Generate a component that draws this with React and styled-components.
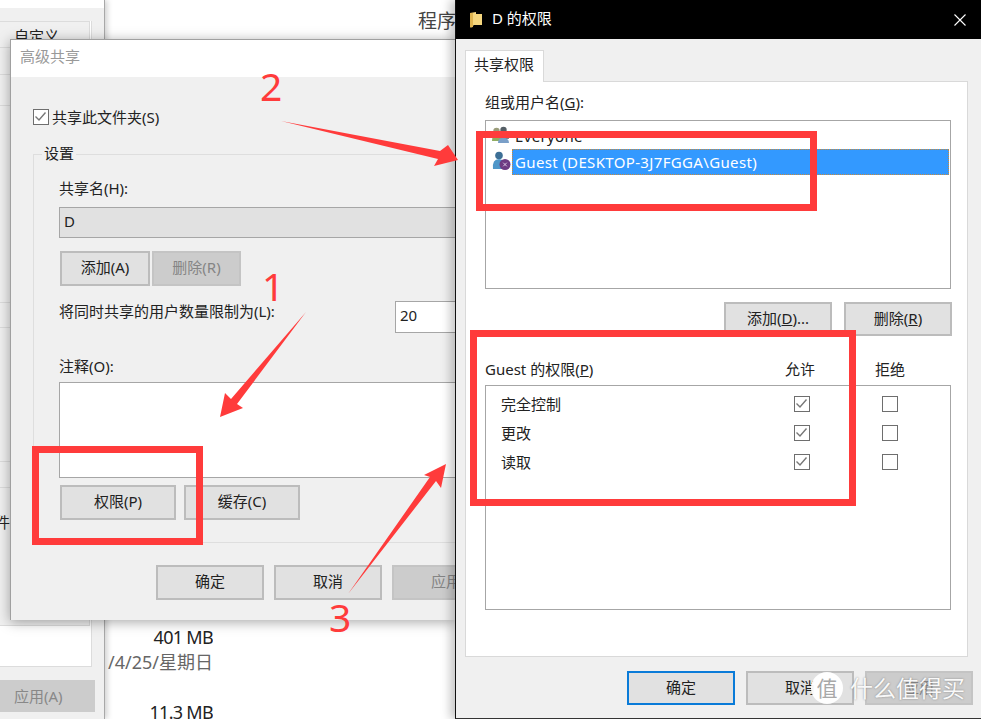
import React from "react";
import styled, { createGlobalStyle } from "styled-components";

const GlobalStyle = createGlobalStyle`
    html, body {
        margin: 0;
        padding: 0;
        background: #fff;
        overflow: hidden;
    }
    * {
        box-sizing: border-box;
    }
`;

const Desktop = styled.div`
    position: relative;
    width: 981px;
    height: 719px;
    overflow: hidden;
    background: #fff;
    color: #222;
    font-family: "Noto Sans", "Noto Sans CJK SC", sans-serif;
    font-size: 15px;
    line-height: 20px;
`;

/* window behind everything, only its edges show */
const BackWindow = styled.div`
    position: absolute;
    left: 0;
    top: 0;
    width: 105px;
    height: 719px;
    background: #f0f0f0;
    border-right: 1px solid #a8a8a8;
    box-shadow: 2px 0 6px rgba(0, 0, 0, 0.2);
    display: flex;
    flex-direction: column;
`;

const BackTop = styled.div`
    height: 8px;
    background: #fff;
`;

const BackHead = styled.div`
    height: 13px;
`;

const BackRow = styled.div`
    height: ${(p) => p.$h}px;
    width: 90px;
    padding-left: 14px;
    padding-top: ${(p) => p.$pad || 0}px;
    background: #f0f0f0;
    border-bottom: 1px solid #dcdcdc;
    border-right: 1px solid #dcdcdc;
    border-top: ${(p) => (p.$first ? "1px solid #dcdcdc" : "0")};
    white-space: nowrap;
`;

const BackTail = styled.div`
    width: 92px;
    height: 41px;
    background: #fff;
    border-right: 1px solid #dcdcdc;
    border-bottom: 1px solid #dcdcdc;
`;

const CutWord = styled.span`
    display: block;
    margin-left: -34px;
`;

const BackBody = styled.div`
    width: 92px;
    background: #fff;
    border-right: 1px solid #dcdcdc;
`;

const BackApply = styled.div`
    width: 95px;
    height: 32px;
    margin-top: 13px;
    background: #ccc;
    color: #888;
    padding-left: 14px;
    line-height: 32px;
`;

const ProgramLabel = styled.div`
    position: absolute;
    left: 418px;
    top: 8px;
    font-size: 19px;
    line-height: 26px;
    color: #444;
    white-space: nowrap;
`;

const SizeColumn = styled.div`
    position: absolute;
    left: 105px;
    top: 626px;
    width: 108px;
    overflow: hidden;
    font-size: 18px;
    line-height: 22px;
    white-space: nowrap;
`;

const SizeText = styled.div`
    display: flex;
    justify-content: flex-end;
    color: ${(p) => (p.$muted ? "#666" : "#222")};
    letter-spacing: ${(p) => (p.$muted ? "0" : "-0.7px")};
    margin-top: ${(p) => p.$top || 0}px;
`;

/* advanced sharing dialog */
const AdvancedDialog = styled.div`
    position: absolute;
    left: 10px;
    top: 39px;
    width: 445px;
    height: 581px;
    overflow: hidden;
    background: #f0f0f0;
    border-top: 1px solid #a0a0a0;
    border-left: 1px solid #a0a0a0;
`;

const DialogShadow = styled.div`
    position: absolute;
    left: 10px;
    top: 39px;
    width: 445px;
    height: 581px;
    box-shadow: 0 2px 12px rgba(0, 0, 0, 0.35);
`;

const AdvancedTitle = styled.div`
    height: 37px;
    background: #fff;
    color: #999;
    padding: 6px 0 0 9px;
`;

const CheckRow = styled.div`
    display: flex;
    align-items: center;
    gap: 3px;
    margin: 31px 0 0 22px;
    height: 18px;
`;

const Box = styled.span`
    display: block;
    width: 16px;
    height: 16px;
    background: #fff;
    border: 1.5px solid #6e6e6e;
    flex: none;
`;

const Group = styled.div`
    position: relative;
    width: 500px;
    margin: 28px 0 0 22px;
    padding: 0 0 22px 25px;
    border: 1px solid #dedede;
`;

const GroupLegend = styled.div`
    position: absolute;
    left: 8px;
    top: -12px;
    padding: 0 2px;
    background: #f0f0f0;
`;

const FieldLabel = styled.div`
    margin-top: ${(p) => p.$top}px;
    white-space: nowrap;
`;

const Input = styled.div`
    height: ${(p) => p.$h}px;
    margin-top: ${(p) => p.$top || 0}px;
    padding: ${(p) => p.$pad || 0}px 0 0 4px;
    background: ${(p) => p.$bg || "#fff"};
    border: 1.5px solid #a6a6a6;
`;

const ButtonRow = styled.div`
    display: flex;
    gap: ${(p) => p.$gap}px;
    margin: ${(p) => p.$top}px 0 0 1px;
`;

const Button = styled.div`
    flex: none;
    width: ${(p) => p.$w}px;
    height: ${(p) => p.$h || 35}px;
    padding-bottom: 3px;
    display: flex;
    align-items: center;
    justify-content: center;
    background: ${(p) => (p.$off ? "#ccc" : "#e1e1e1")};
    color: ${(p) => (p.$off ? "#858585" : "#222")};
    border: 2px solid ${(p) => (p.$focus ? "#0a7bd8" : p.$off ? "#c4c4c4" : "#bcbcbc")};
    white-space: nowrap;
`;

const LimitRow = styled.div`
    display: grid;
    grid-template-columns: 336px 1fr;
    margin-top: 15px;
    line-height: 20px;
`;

const DialogFooter = styled.div`
    display: flex;
    gap: ${(p) => p.$gap || 10}px;
    margin: ${(p) => p.$top}px 0 0 ${(p) => p.$left}px;
`;

/* permissions dialog */
const PermDialog = styled.div`
    position: absolute;
    left: 455px;
    top: 0;
    width: 526px;
    height: 719px;
    background: #f0f0f0;
    border-left: 1px solid #111;
    border-bottom: 1px solid #333;
    box-shadow: -5px 0 9px rgba(0, 0, 0, 0.22);
`;

const TitleBar = styled.div`
    height: 39px;
    background: #000;
    color: #fff;
    display: flex;
    align-items: center;
    padding: 0 15px 0 14px;
`;

const TitleText = styled.span`
    margin: 0 0 3px 10px;
    flex: 1;
`;

const Tab = styled.div`
    position: relative;
    z-index: 1;
    width: 79px;
    height: 32px;
    margin: 11px 0 0 9px;
    padding: 3px 0 0 8px;
    background: #fff;
    border: 1px solid #d9d9d9;
    border-bottom: 0;
`;

const TabPanel = styled.div`
    width: 503px;
    height: 576px;
    margin: -1px 0 0 9px;
    padding: 10px 0 0 19px;
    background: #fff;
    border: 1px solid #d9d9d9;
`;

const UserList = styled.div`
    width: 466px;
    height: 169px;
    margin-top: 8px;
    padding-top: 4px;
    border: 1.5px solid #a6a6a6;
`;

const UserRow = styled.div`
    display: flex;
    align-items: flex-start;
    height: ${(p) => p.$h}px;
    padding: 0 1px 0 6px;
`;

const UserName = styled.span`
    flex: 1;
    height: 100%;
    padding-left: 3px;
    line-height: ${(p) => p.$line}px;
    letter-spacing: 0.35px;
    white-space: nowrap;
    ${(p) =>
        p.$selected &&
        `
        background: #3399ff;
        color: #fff;
        outline: 1px dotted #c98a3a;
        outline-offset: -1px;
    `}
`;

const UserActions = styled.div`
    display: flex;
    justify-content: flex-end;
    gap: 12px;
    width: 467px;
    margin-top: 13px;
`;

const PermHeader = styled.div`
    display: grid;
    grid-template-columns: 270px 90px 90px;
    margin-top: 23px;
    height: 20px;
`;

const HeaderCell = styled.div`
    text-align: center;
`;

const PermList = styled.div`
    width: 466px;
    height: 225px;
    margin-top: 6px;
    padding: 3px 16px 0 15px;
    border: 1.5px solid #a6a6a6;
`;

const PermRow = styled.div`
    display: grid;
    grid-template-columns: 1fr 88px 88px;
    align-items: center;
    justify-items: center;
    height: 29px;
`;

const PermName = styled.span`
    justify-self: start;
`;

/* red annotations painted on top of the screenshot */
const RedBox = styled.div`
    position: absolute;
    left: ${(p) => p.$x}px;
    top: ${(p) => p.$y}px;
    width: ${(p) => p.$w}px;
    height: ${(p) => p.$h}px;
    border: 7px solid #ff3b3b;
`;

const RedNumber = styled.div`
    position: absolute;
    left: ${(p) => p.$x}px;
    top: ${(p) => p.$y}px;
    color: #ff3b3b;
    font-size: 39px;
    font-weight: 400;
    line-height: 40px;
`;

const ArrowLayer = styled.svg`
    position: absolute;
    left: 0;
    top: 0;
`;

const Watermark = styled.div`
    position: absolute;
    left: 811px;
    top: 672px;
    display: flex;
    align-items: center;
    gap: 7px;
    color: rgba(255, 255, 255, 0.95);
    font-size: 23px;
    line-height: 32px;
    white-space: nowrap;
    text-shadow: 0 0 2px rgba(110, 110, 110, 0.8);
`;

const WatermarkBadge = styled.span`
    width: 32px;
    height: 32px;
    border-radius: 50%;
    background: rgba(255, 255, 255, 0.95);
    color: #a8a8a8;
    font-size: 21px;
    text-align: center;
    text-shadow: none;
`;

const Check = () => (
    <svg width="13" height="13" viewBox="0 0 13 13" style={{ display: "block" }}>
        <path d="M1.5 6.5 L5 10 L11.5 2.5" fill="none" stroke="#777" strokeWidth="1.4" />
    </svg>
);

const FolderIcon = () => (
    <svg width="12" height="16" viewBox="0 0 12 16">
        <path d="M0 1 L6 0 L6 2 L12 2 L12 13 L4 13 L1 15.5 L0 15 Z" fill="#f5d67e" />
        <path d="M0 1 L3 1 L3 15 L1 15.5 L0 15 Z" fill="#e0b44e" />
    </svg>
);

const CloseIcon = () => (
    <svg width="12" height="12" viewBox="0 0 12 12">
        <path d="M0.5 0.5 L11.5 11.5 M11.5 0.5 L0.5 11.5" stroke="#fff" strokeWidth="1.1" />
    </svg>
);

const EveryoneIcon = () => (
    <svg width="20" height="20" viewBox="0 0 20 20" style={{ flex: "none" }}>
        <circle cx="11.5" cy="5" r="3.2" fill="#555f66" />
        <path d="M7 14 Q7 8 12 8 Q17 8 17 14 Z" fill="#7a8288" />
        <circle cx="4.5" cy="6" r="3.2" fill="#9a9c7a" />
        <path d="M0 16 Q0 9 5 9 Q9 9 9 16 Z" fill="#90ad62" />
        <circle cx="11" cy="10.5" r="2.6" fill="#8fb0d0" />
        <path d="M6 18 Q6 13 11 13 Q17 13 17 18 Z" fill="#7a9fc8" />
    </svg>
);

const GuestIcon = () => (
    <svg width="20" height="20" viewBox="0 0 20 20" style={{ flex: "none", marginTop: 2 }}>
        <circle cx="7" cy="4.5" r="3.8" fill="#3d6f96" />
        <path d="M1 18 Q0 8 7 8 Q13 8 13 18 Z" fill="#4f97c9" />
        <circle cx="13" cy="13.5" r="5.5" fill="#6d3b82" />
        <path d="M11.2 11.7 L14.8 15.3 M14.8 11.7 L11.2 15.3" stroke="#d8c6e2" strokeWidth="1" />
    </svg>
);

const backRows = [
    { h: 27, first: true, pad: 4, text: "自定义" },
    { h: 27 },
    { h: 31 },
    { h: 197 },
    { h: 25 },
    { h: 134 },
    { h: 26 },
    { h: 138, pad: 24, cut: "文件" },
];

const permissions = ["完全控制", "更改", "读取"];

export default function App() {
    return (
        <Desktop>
            <GlobalStyle />

            <BackWindow>
                <BackTop />
                <BackHead />
                <BackBody>
                    {backRows.map((r, i) => (
                        <BackRow key={i} $h={r.h} $first={r.first} $pad={r.pad}>
                            {r.text}
                            {r.cut && <CutWord>{r.cut}</CutWord>}
                        </BackRow>
                    ))}
                    <BackTail />
                </BackBody>
                <BackApply>应用(A)</BackApply>
            </BackWindow>

            <ProgramLabel>程序</ProgramLabel>
            <SizeColumn>
                <SizeText>401 MB</SizeText>
                <SizeText $muted $top={3}>2021/4/25/星期日</SizeText>
                <SizeText $top={28}>11.3 MB</SizeText>
            </SizeColumn>

            <DialogShadow />
            <AdvancedDialog>
                <AdvancedTitle>高级共享</AdvancedTitle>
                <CheckRow>
                    <Box>
                        <Check />
                    </Box>
                    共享此文件夹(S)
                </CheckRow>
                <Group>
                    <GroupLegend>设置</GroupLegend>
                    <FieldLabel $top={23}>共享名(H):</FieldLabel>
                    <Input $h={31} $top={9} $pad={3} $bg="#e1e1e1">D</Input>
                    <ButtonRow $gap={2} $top={13}>
                        <Button $w={90}>添加(A)</Button>
                        <Button $w={89} $off>删除(R)</Button>
                    </ButtonRow>
                    <LimitRow>
                        将同时共享的用户数量限制为(L):
                        <Input $h={32} $pad={3}>20</Input>
                    </LimitRow>
                    <FieldLabel $top={23}>注释(O):</FieldLabel>
                    <Input $h={96} $top={6} />
                    <ButtonRow $gap={8} $top={7}>
                        <Button $w={116}>权限(P)</Button>
                        <Button $w={116}>缓存(C)</Button>
                    </ButtonRow>
                </Group>
                <DialogFooter $top={22} $left={145}>
                    <Button $w={108}>确定</Button>
                    <Button $w={108}>取消</Button>
                    <Button $w={108} $off>应用</Button>
                </DialogFooter>
            </AdvancedDialog>

            <PermDialog>
                <TitleBar>
                    <FolderIcon />
                    <TitleText>D 的权限</TitleText>
                    <CloseIcon />
                </TitleBar>
                <Tab>共享权限</Tab>
                <TabPanel>
                    <div>
                        组或用户名(<u>G</u>):
                    </div>
                    <UserList>
                        <UserRow $h={24}>
                            <EveryoneIcon />
                            <UserName $line={22}>Everyone</UserName>
                        </UserRow>
                        <UserRow $h={26}>
                            <GuestIcon />
                            <UserName $line={26} $selected>
                                Guest (DESKTOP-3J7FGGA\Guest)
                            </UserName>
                        </UserRow>
                    </UserList>
                    <UserActions>
                        <Button $w={108} $h={34}>
                            添加(<u>D</u>)...
                        </Button>
                        <Button $w={108} $h={34}>
                            删除(<u>R</u>)
                        </Button>
                    </UserActions>
                    <PermHeader>
                        <span>
                            Guest 的权限(<u>P</u>)
                        </span>
                        <HeaderCell>允许</HeaderCell>
                        <HeaderCell>拒绝</HeaderCell>
                    </PermHeader>
                    <PermList>
                        {permissions.map((name) => (
                            <PermRow key={name}>
                                <PermName>{name}</PermName>
                                <Box>
                                    <Check />
                                </Box>
                                <Box />
                            </PermRow>
                        ))}
                    </PermList>
                </TabPanel>
                <DialogFooter $top={14} $left={171} $gap={11}>
                    <Button $w={108} $h={34} $focus>确定</Button>
                    <Button $w={108} $h={34}>取消</Button>
                    <Button $w={108} $h={34} $off>应用</Button>
                </DialogFooter>
            </PermDialog>

            <RedBox $x={32} $y={446} $w={171} $h={99} />
            <RedBox $x={476} $y={131} $w={341} $h={80} />
            <RedBox $x={470} $y={330} $w={386} $h={176} />

            <RedNumber $x={260} $y={66}>2</RedNumber>
            <RedNumber $x={262} $y={266}>1</RedNumber>
            <RedNumber $x={329} $y={597}>3</RedNumber>

            <ArrowLayer width="981" height="719" viewBox="0 0 981 719">
                <polygon points="281,121 440,151 448,145 458,160 434,166 438,159" fill="#ff3b3b" />
                <polygon points="306,312 237,404 243,408 220,417 225,393 231,399" fill="#ff3b3b" />
                <polygon points="348,594 430,477 424,475 446,464 441,488 436,481" fill="#ff3b3b" />
            </ArrowLayer>

            <Watermark>
                <WatermarkBadge>值</WatermarkBadge>
                什么值得买
            </Watermark>
        </Desktop>
    );
}
